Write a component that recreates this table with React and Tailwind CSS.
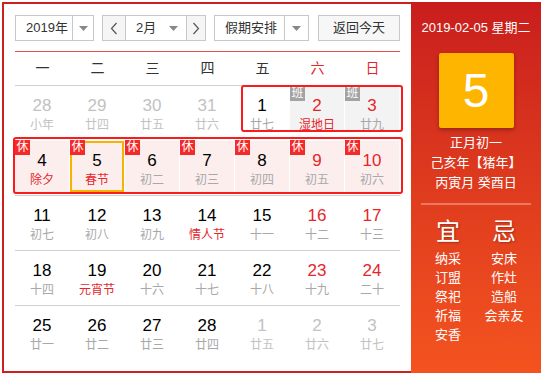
import React from "react";

const weekdays = ["一", "二", "三", "四", "五", "六", "日"];

// other: 非本月, rest: 休, work: 班
const weeks = [
  [
    { d: 28, l: "小年", other: true },
    { d: 29, l: "廿四", other: true },
    { d: 30, l: "廿五", other: true },
    { d: 31, l: "廿六", other: true },
    { d: 1, l: "廿七" },
    { d: 2, l: "湿地日", red: true, lred: true, work: true },
    { d: 3, l: "廿九", red: true, work: true },
  ],
  [
    { d: 4, l: "除夕", lred: true, rest: true },
    { d: 5, l: "春节", lred: true, rest: true, today: true },
    { d: 6, l: "初二", rest: true },
    { d: 7, l: "初三", rest: true },
    { d: 8, l: "初四", rest: true },
    { d: 9, l: "初五", red: true, rest: true },
    { d: 10, l: "初六", red: true, rest: true },
  ],
  [
    { d: 11, l: "初七" },
    { d: 12, l: "初八" },
    { d: 13, l: "初九" },
    { d: 14, l: "情人节", lred: true },
    { d: 15, l: "十一" },
    { d: 16, l: "十二", red: true },
    { d: 17, l: "十三", red: true },
  ],
  [
    { d: 18, l: "十四" },
    { d: 19, l: "元宵节", lred: true },
    { d: 20, l: "十六" },
    { d: 21, l: "十七" },
    { d: 22, l: "十八" },
    { d: 23, l: "十九", red: true },
    { d: 24, l: "二十", red: true },
  ],
  [
    { d: 25, l: "廿一" },
    { d: 26, l: "廿二" },
    { d: 27, l: "廿三" },
    { d: 28, l: "廿四" },
    { d: 1, l: "廿五", other: true },
    { d: 2, l: "廿六", other: true },
    { d: 3, l: "廿七", other: true },
  ],
];

const yi = ["纳采", "订盟", "祭祀", "祈福", "安香"];
const ji = ["安床", "作灶", "造船", "会亲友"];

const Caret = () => (
  <svg width="9" height="5" viewBox="0 0 9 5">
    <path d="M0 0h9L4.5 5z" fill="#888" />
  </svg>
);

const Chevron = ({ left }) => (
  <svg width="8" height="13" viewBox="0 0 8 13">
    <path
      d={left ? "M6.5 1L1.5 6.5l5 5.5" : "M1.5 1l5 5.5-5 5.5"}
      fill="none"
      stroke="#555"
      strokeWidth="1.2"
    />
  </svg>
);

const DayCell = ({ day }) => {
  let bg = "h-[51px]";
  if (day.rest) bg = "bg-[#fdeeee] h-[51px]";
  else if (day.work) bg = "bg-[#f3f3f3] h-[45px]";

  let numColor = "text-black";
  if (day.other) numColor = "text-[#c2c2c2]";
  else if (day.red) numColor = "text-[#e5262b]";

  const lunarColor = day.lred ? "text-[#e5262b]" : day.other ? "text-[#c2c2c2]" : "text-[#a8a8a8]";

  return (
    <div className="w-[55px] pr-px">
      <div
        className={`relative flex flex-col items-center ${bg} ${
          day.today ? "border-2 border-[#f5b400] pt-[7px]" : "pt-[9px]"
        }`}
      >
        {day.rest && (
          <span
            className={`absolute w-[15px] h-[15px] bg-[#f42a2a] text-white text-[12px] leading-[15px] text-center ${
              day.today ? "left-[-2px] top-[-3px]" : "left-0 top-[-1px]"
            }`}
          >
            休
          </span>
        )}
        {day.work && (
          <span className="absolute left-0 top-0 w-[15px] h-[15px] bg-[#a3a3a3] text-white text-[12px] leading-[15px] text-center">
            班
          </span>
        )}
        <span className={`text-[17px] leading-[22px] ${numColor}`}>{day.d}</span>
        <span className={`text-[12px] leading-[16px] ${lunarColor}`}>{day.l}</span>
      </div>
    </div>
  );
};

export default function App() {
  return (
    <div className="p-[2px] font-['Liberation_Sans','Noto_Sans_CJK_SC',sans-serif]">
      <div className="flex w-[539px] h-[371px]">
        {/* left: calendar */}
        <div className="w-[409px] h-[371px] border-y-2 border-l-2 border-[#cf1f1f] pl-[11px] pt-[11px] bg-white">
          <div className="flex h-[26px] text-[13px] text-[#333]">
            <div className="flex w-[79px] border border-[#c8c8c8]">
              <div className="w-[57px] pl-[10px] flex items-center border-r border-[#c8c8c8]">2019年</div>
              <div className="flex-1 flex items-center justify-center">
                <Caret />
              </div>
            </div>
            <div className="ml-[8px] flex w-[104px] border border-[#c8c8c8]">
              <div className="w-[23px] flex items-center justify-center bg-[#f5f5f5] border-r border-[#c8c8c8]">
                <Chevron left />
              </div>
              <div className="w-[60px] flex items-center justify-between pl-[10px] pr-[8px]">
                <span>2月</span>
                <Caret />
              </div>
              <div className="flex-1 flex items-center justify-center bg-[#f5f5f5] border-l border-[#c8c8c8]">
                <Chevron />
              </div>
            </div>
            <div className="ml-[8px] flex w-[95px] border border-[#c8c8c8]">
              <div className="w-[70px] pl-[10px] flex items-center border-r border-[#c8c8c8]">假期安排</div>
              <div className="flex-1 flex items-center justify-center">
                <Caret />
              </div>
            </div>
            <button className="ml-[9px] w-[82px] border border-[#c8c8c8] bg-[#f7f7f7] text-[13px] text-[#333]">
              返回今天
            </button>
          </div>

          <div className="mt-[10px] w-[385px] h-px bg-[#e8504b]" />

          <div className="flex w-[385px] h-[34px] border-b border-[#d0d0d0] text-[14px]">
            {weekdays.map((w, i) => (
              <div
                key={w}
                className={`w-[55px] flex items-center justify-center ${i >= 5 ? "text-[#e5262b]" : "text-[#333]"}`}
              >
                {w}
              </div>
            ))}
          </div>

          <div className="relative w-[385px]">
            {weeks.map((week, wi) => (
              <div
                key={wi}
                className={`flex h-[55px] ${wi < 4 ? "border-b" : ""} ${wi === 0 ? "border-white" : "border-[#d0d0d0]"}`}
              >
                {week.map((day, di) => (
                  <DayCell key={di} day={day} />
                ))}
              </div>
            ))}
            <div className="absolute left-[226px] top-[-1px] w-[162px] h-[47px] border-2 border-[#fb1b1b] rounded-[3px]" />
            <div className="absolute left-[-2px] top-[51px] w-[390px] h-[57px] border-2 border-[#fb1b1b] rounded-[3px]" />
          </div>
        </div>

        {/* right: today panel */}
        <div className="w-[130px] h-[371px] bg-linear-to-b from-[#c91d1d] to-[#f4531f] flex flex-col items-center pt-[17px] text-white">
          <div className="text-[13px] leading-[18px]">2019-02-05 星期二</div>
          <div className="mt-[16px] w-[75px] h-[75px] rounded-[2px] bg-[#fdb500] shadow-[0_2px_4px_rgba(0,0,0,0.3)] flex items-center justify-center text-[48px] leading-none">
            5
          </div>
          <div className="mt-[5px] flex flex-col items-center text-[13px] leading-[20px]">
            <span>正月初一</span>
            <span>己亥年【猪年】</span>
            <span>丙寅月 癸酉日</span>
          </div>
          <div className="mt-[10px] w-[110px] h-[2px] bg-[#ec7a63]" />
          <div className="mt-[13px] flex">
            <div className="w-[56px] flex flex-col items-center">
              <span className="text-[24px] leading-[28px] [text-shadow:1px_1px_2px_rgba(0,0,0,0.3)]">宜</span>
              <div className="mt-[3px] flex flex-col items-center text-[13px] leading-[19px]">
                {yi.map((t) => (
                  <span key={t}>{t}</span>
                ))}
              </div>
            </div>
            <div className="w-[56px] flex flex-col items-center">
              <span className="text-[24px] leading-[28px] [text-shadow:1px_1px_2px_rgba(0,0,0,0.3)]">忌</span>
              <div className="mt-[3px] flex flex-col items-center text-[13px] leading-[19px]">
                {ji.map((t) => (
                  <span key={t}>{t}</span>
                ))}
              </div>
            </div>
          </div>
        </div>
      </div>
    </div>
  );
}
